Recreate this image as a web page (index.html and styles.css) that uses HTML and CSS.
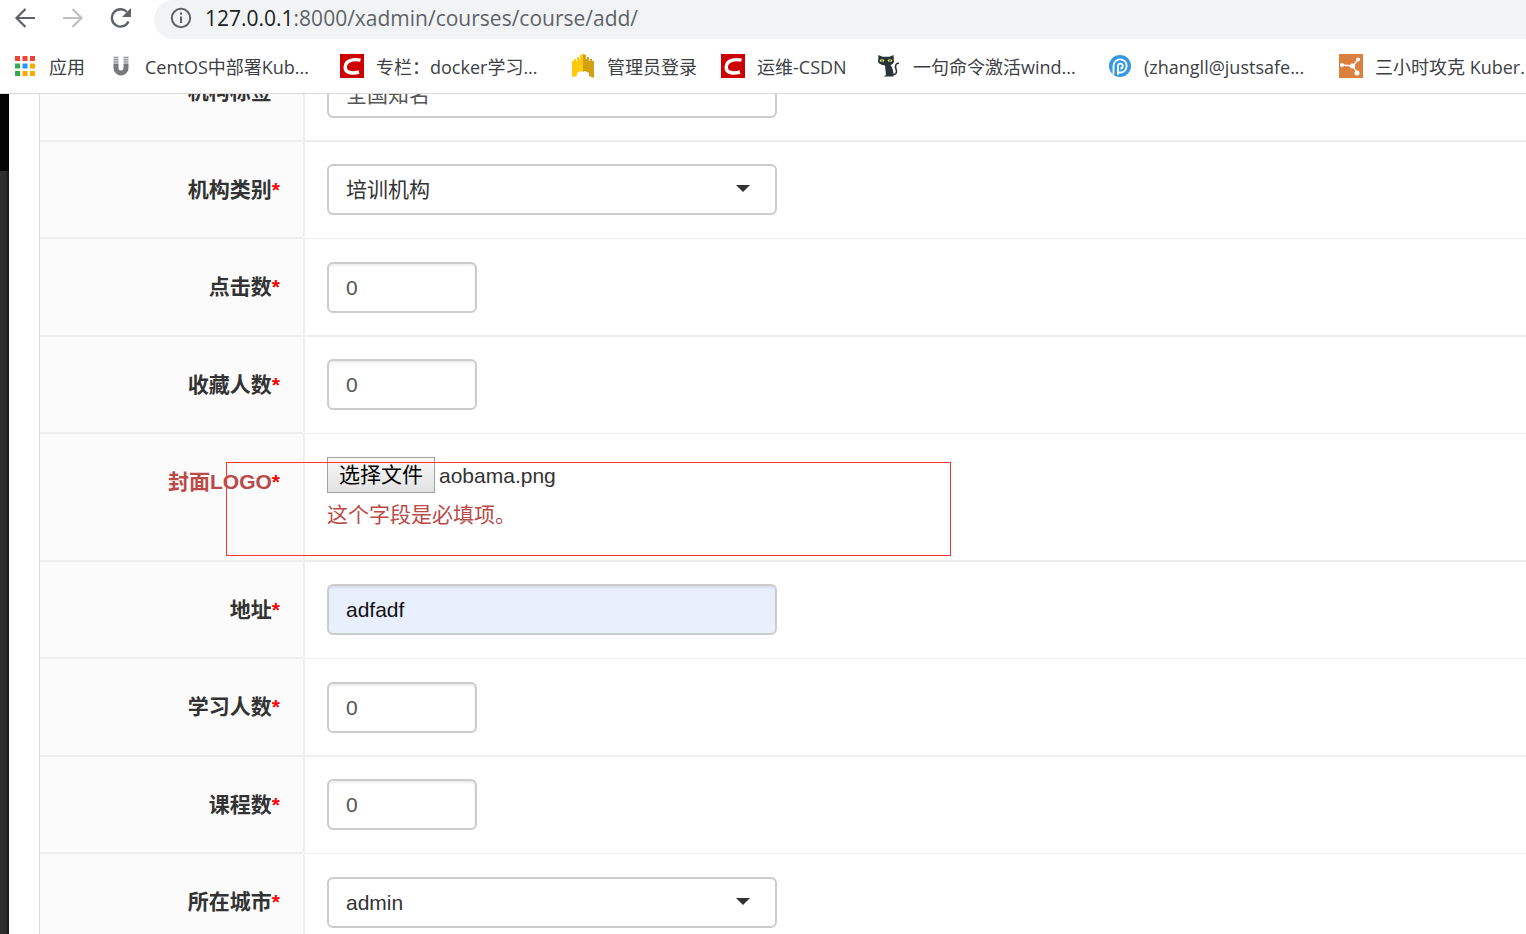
FILE: index.html
```html
<!DOCTYPE html>
<html lang="zh-CN">
<head>
<meta charset="utf-8">
<title>添加课程</title>
<link rel="stylesheet" href="styles.css">
</head>
<body>
<header class="browser">
  <div class="toolbar">
    <button class="nav" type="button" aria-label="后退">
      <svg width="22" height="20" viewBox="0 0 22 20" fill="none" stroke="#5f6368" stroke-width="2.2"><path d="M21 10H3M11.500 1L2.500 10l9 9"/></svg>
    </button>
    <button class="nav" type="button" aria-label="前进">
      <svg width="22" height="20" viewBox="0 0 22 20" fill="none" stroke="#bdbfc1" stroke-width="2.2"><path d="M1 10h18M10.500 1l9 9-9 9"/></svg>
    </button>
    <button class="nav" type="button" aria-label="重新加载">
      <svg width="22" height="20" viewBox="0 0 22 20"><path d="M18.500 13.500A8.700 8.700 0 1 1 17 4" fill="none" stroke="#5f6368" stroke-width="2.4"/><path d="M21 0v9h-9z" fill="#5f6368"/></svg>
    </button>
    <div class="address">
      <svg width="22" height="22" viewBox="0 0 22 22"><circle cx="11" cy="11" r="9.200" fill="none" stroke="#5f6368" stroke-width="2"/><path d="M10 5.500h2v2.200h-2zM10 9.500h2v6.500h-2z" fill="#5f6368"/></svg>
      <span class="url"><span class="host">127.0.0.1</span>:8000/xadmin/courses/course/add/</span>
    </div>
  </div>
  <nav class="bookmarks">
    <a class="bookmark apps" href="#">
      <svg width="20" height="20" viewBox="0 0 20 20"><path d="M0 0h5v5H0zM7.500 0h5v5h-5zM15 0h5v5h-5z" fill="#f44336"/><path d="M0 7.500h5v5H0zM0 15h5v5H0z" fill="#34a853"/><path d="M7.500 7.500h5v5h-5z" fill="#2196f3"/><path d="M15 7.500h5v5h-5zM7.500 15h5v5h-5zM15 15h5v5h-5z" fill="#fbab00"/></svg>
      <span>应用</span>
    </a>
    <a class="bookmark wide" href="#">
      <svg width="24" height="24" viewBox="0 0 24 24"><path d="M7 9.500V14a5 5 0 0 0 10 0V9.500" fill="none" stroke="#77797b" stroke-width="5"/><path d="M4.500 3.500h5M14.500 3.500h5M4.500 5.800h5M14.500 5.800h5M4.500 8.100h5M14.500 8.100h5" stroke="#909294" stroke-width="1.500"/></svg>
      <span>CentOS中部署Kub...</span>
    </a>
    <a class="bookmark wide" href="#">
      <svg width="24" height="24" viewBox="0 0 24 24"><path fill="#c00" d="M0 0h24v24H0z"/><path d="M20.500 6.200C13 4.600 5.500 6.500 5.200 13c-.2 6 7 7 13.800 5" fill="none" stroke="#fff" stroke-width="3.4"/></svg>
      <span>专栏：docker学习...</span>
    </a>
    <a class="bookmark" href="#">
      <svg width="24" height="24" viewBox="0 0 24 24"><path d="M1 7h2V5h2v2h1V3h2v2h1V1l3-1v18l-2-1-4 2v3l-5 1z" fill="#ffc90e"/><path d="M12 0l3 1v4h1V3h2v4h1V5h2v2h2v17l-5-2v-3l-4-2-2 1z" fill="#d2a010"/></svg>
      <span>管理员登录</span>
    </a>
    <a class="bookmark medium" href="#">
      <svg width="24" height="24" viewBox="0 0 24 24"><path fill="#c00" d="M0 0h24v24H0z"/><path d="M20.500 6.200C13 4.600 5.500 6.500 5.200 13c-.2 6 7 7 13.800 5" fill="none" stroke="#fff" stroke-width="3.4"/></svg>
      <span>运维-CSDN</span>
    </a>
    <a class="bookmark wide" href="#">
      <svg width="24" height="24" viewBox="0 0 24 24"><path d="M1.500 1l4 1.700h7L16.500 1l.5 6.500c-.3 2-2 3-3.500 3.500 2.500 3 3 7 3 11.500H6.500L9 21l-1-9.500C4 11 1.500 9.500 1 7.500z" fill="#29343a"/><path d="M15 20.500c5 1 5-3 4-5.500-1.500-3.500.5-6.500 3-5.500" fill="none" stroke="#29343a" stroke-width="1.600"/><ellipse cx="5" cy="6.500" rx="2.200" ry="1.500" fill="#dbe75b"/><ellipse cx="13" cy="6.500" rx="2.200" ry="1.500" fill="#dbe75b"/><path d="M5 5.200v2.600M13 5.200v2.600" stroke="#29343a"/></svg>
      <span>一句命令激活wind...</span>
    </a>
    <a class="bookmark wide" href="#">
      <svg width="24" height="24" viewBox="0 0 24 24"><circle cx="12" cy="12" r="11" fill="#3498e3"/><path d="M5.500 20.500V12a6.600 6.600 0 1 1 6.600 6.500H9" fill="none" stroke="#fff" stroke-width="1.800"/><path d="M10 21v-9a2.400 2.400 0 1 1 2.400 2.500" fill="none" stroke="#fff" stroke-width="1.800"/></svg>
      <span>(zhangll@justsafe...</span>
    </a>
    <a class="bookmark wide" href="#">
      <svg width="24" height="24" viewBox="0 0 24 24"><path fill="#dc803f" d="M0 0h24v24H0z"/><path d="M3 11l11 1 4.500-6M14 12l4 7" fill="none" stroke="#fff" stroke-width="1.400"/><circle cx="3" cy="11" r="2" fill="#fff"/><circle cx="13.500" cy="12" r="2.600" fill="#fff"/><circle cx="19" cy="5.500" r="2" fill="#fff"/><circle cx="18" cy="19" r="2.500" fill="#fff"/></svg>
      <span>三小时攻克 Kuber.</span>
    </a>
  </nav>
</header>
<div class="page">
  <aside class="sidebar"><div class="sidebar-top"></div></aside>
  <form class="form">
    <div class="row">
      <label class="name" for="tag">机构标签<i class="blank">*</i></label>
      <div class="field"><input class="control" id="tag" type="text" value="全国知名"></div>
    </div>
    <div class="row">
      <label class="name" for="category">机构类别<i>*</i></label>
      <div class="field"><div class="picker"><select class="control" id="category"><option>培训机构</option></select></div></div>
    </div>
    <div class="row">
      <label class="name" for="clicks">点击数<i>*</i></label>
      <div class="field"><input class="control short" id="clicks" type="text" value="0"></div>
    </div>
    <div class="row">
      <label class="name" for="favs">收藏人数<i>*</i></label>
      <div class="field"><input class="control short" id="favs" type="text" value="0"></div>
    </div>
    <div class="row error">
      <label class="name" for="logo">封面LOGO<i>*</i></label>
      <div class="field">
        <div class="file"><button class="file-button" id="logo" type="button">选择文件</button><span>aobama.png</span></div>
        <p class="message">这个字段是必填项。</p>
      </div>
      <div class="highlight"></div>
    </div>
    <div class="row">
      <label class="name" for="address">地址<i>*</i></label>
      <div class="field"><input class="control filled" id="address" type="text" value="adfadf"></div>
    </div>
    <div class="row">
      <label class="name" for="students">学习人数<i>*</i></label>
      <div class="field"><input class="control short" id="students" type="text" value="0"></div>
    </div>
    <div class="row">
      <label class="name" for="courses">课程数<i>*</i></label>
      <div class="field"><input class="control short" id="courses" type="text" value="0"></div>
    </div>
    <div class="row">
      <label class="name" for="city">所在城市<i>*</i></label>
      <div class="field"><div class="picker"><select class="control" id="city"><option>admin</option></select></div></div>
    </div>
  </form>
</div>
</body>
</html>
```

FILE: styles.css
```css
* {
  box-sizing: border-box;
}

body {
  display: flex;
  flex-direction: column;
  height: 100vh;
  margin: 0;
  overflow: hidden;
  background: #fff;
  color: #333;
  font-family: "Liberation Sans", "Noto Sans CJK SC", sans-serif;
  font-size: 21px;
}

/* Browser chrome */
.browser {
  flex: none;
  overflow: hidden;
  border-bottom: 1px solid #d9dadc;
  font-family: "Open Sans", "Noto Sans CJK SC", sans-serif;
}

.toolbar {
  display: flex;
  align-items: center;
  height: 39px;
  padding-left: 14px;
  gap: 26px;
}

.nav {
  display: flex;
  flex: none;
  margin: 0 0 4px;
  padding: 0;
  border: 0;
  background: none;
}

.address {
  display: flex;
  flex: 1;
  align-items: center;
  height: 39px;
  margin-left: -4px;
  padding: 0 0 3px 16px;
  gap: 13px;
  border-radius: 20px 0 0 20px;
  background: #f1f3f4;
}

.url {
  color: #5f6368;
  font-size: 21px;
  line-height: 30px;
  white-space: nowrap;
}

.host {
  color: #202124;
}

.bookmarks {
  display: flex;
  align-items: center;
  height: 54px;
  padding-left: 15px;
  gap: 24px;
}

.bookmark {
  display: flex;
  flex: none;
  align-items: center;
  gap: 12px;
  color: #3c4043;
  font-size: 18px;
  line-height: 26px;
  text-decoration: none;
  white-space: nowrap;
}

.bookmark svg {
  flex: none;
}

.bookmark span {
  padding-top: 2px;
}

.apps {
  gap: 14px;
}

.medium {
  width: 132px;
}

.wide {
  width: 207px;
}

/* Admin page */
.page {
  display: flex;
  flex: 1;
  min-height: 0;
  overflow: hidden;
}

.sidebar {
  flex: none;
  width: 9px;
  margin-right: 30px;
  background: linear-gradient(90deg, #2e2e2e 60%, #151515);
}

.sidebar-top {
  height: 77px;
  background: #050505;
}

.form {
  flex: 1;
  margin-top: -52px;
  border-left: 1px solid #ddd;
}

.row {
  display: grid;
  position: relative;
  grid-template-columns: 263px 1fr;
}

.name {
  padding: 33px 23px 0 0;
  border-top: 2px solid #eee;
  background: #fbfbfb;
  font-weight: bold;
  line-height: 30px;
  text-align: right;
}

.name i {
  color: #f00;
  font-style: normal;
}

.name .blank {
  visibility: hidden;
}

.field {
  padding: 22px;
  border-top: 2px solid #eee;
  border-left: 2px solid #eee;
}

.row:nth-child(odd) .field {
  margin-top: 1px;
  padding-top: 23px;
  border-top-width: 1px;
}

.control {
  display: block;
  width: 450px;
  height: 51px;
  margin: 0;
  padding: 0 17px;
  border: 2px solid #ccc;
  border-radius: 6px;
  background: #fff;
  box-shadow: inset 0 2px 2px rgba(0, 0, 0, 0.07);
  color: #555;
  font: inherit;
}

.short {
  width: 150px;
}

.filled {
  background: #e8effd;
  color: #111;
}

.picker {
  position: relative;
  width: 450px;
}

.picker .control {
  appearance: none;
  box-shadow: none;
  color: #333;
}

.picker::after {
  position: absolute;
  top: 21px;
  right: 27px;
  border: 7px solid transparent;
  border-top-color: #333;
  border-bottom: 0;
  content: "";
  pointer-events: none;
}

.error .name,
.message {
  color: #b94a48;
}

.error .field {
  padding-bottom: 30px;
}

.file {
  display: flex;
  align-items: center;
  gap: 4px;
}

.file span {
  padding-top: 2px;
}

.file-button {
  width: 108px;
  height: 36px;
  padding: 0;
  border: 1px solid #a0a0a0;
  background: linear-gradient(#f8f8f8, #e2e2e2);
  color: #000;
  font: inherit;
  line-height: 30px;
}

.message {
  margin: 7px 0 0;
  line-height: 30px;
}

.highlight {
  position: absolute;
  top: 30px;
  left: 186px;
  width: 725px;
  height: 94px;
  border: 1px solid #f33;
  pointer-events: none;
}
```
